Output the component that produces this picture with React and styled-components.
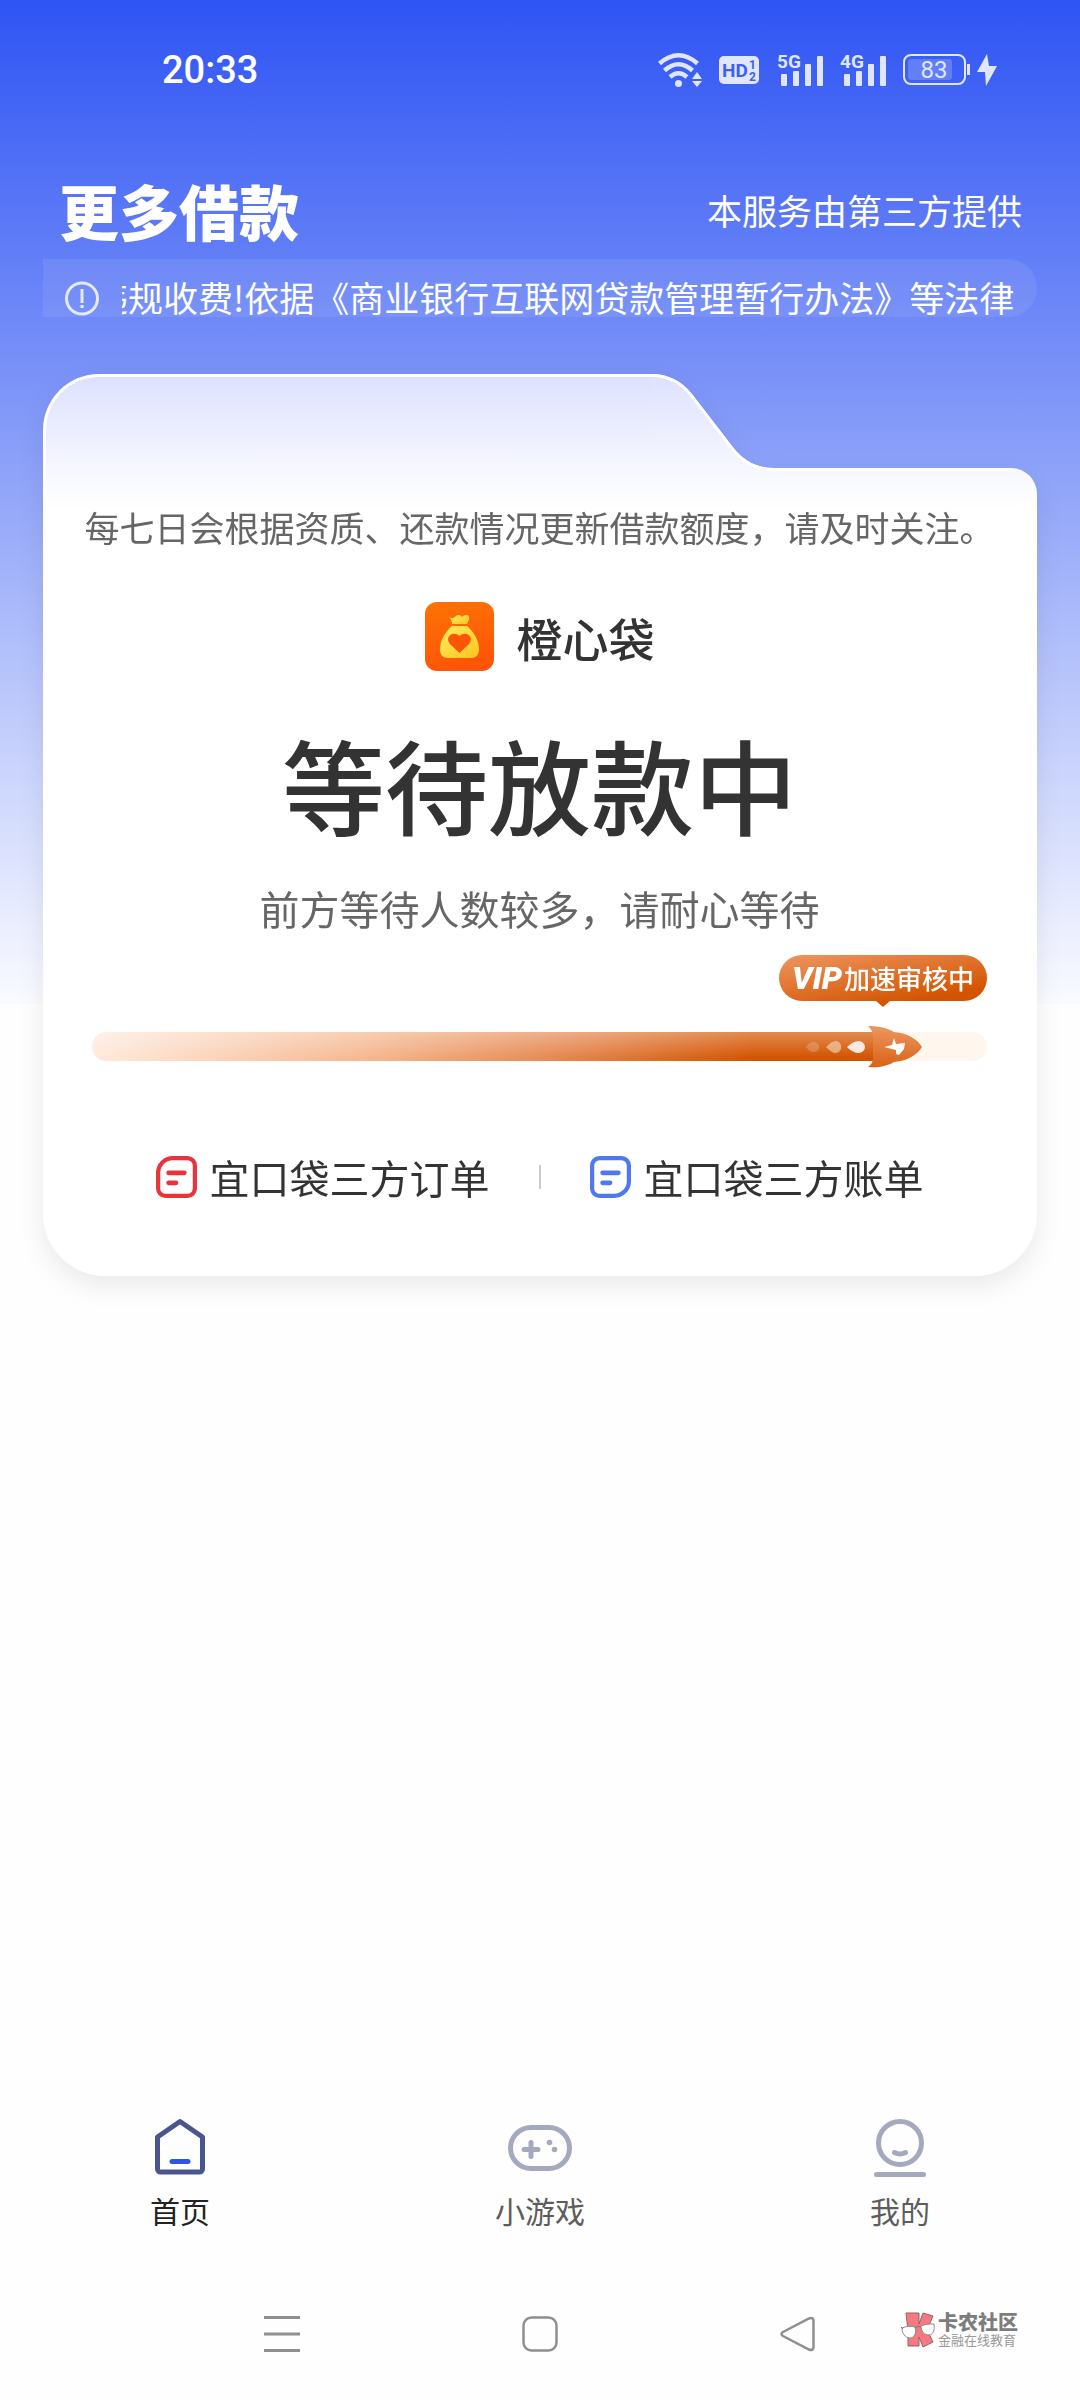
import React, { useState } from "react";
import styled, { createGlobalStyle } from "styled-components";

const GlobalStyle = createGlobalStyle`
  * {
    box-sizing: border-box;
  }
  body {
    margin: 0;
    background: #fefefe;
    font-family: "Noto Sans CJK SC", "Noto Sans", sans-serif;
    color: #333333;
  }
  button {
    border: none;
    background: none;
    padding: 0;
    font-family: inherit;
    cursor: pointer;
  }
  svg {
    display: block;
    flex: none;
  }
`;

const Page = styled.div`
  position: relative;
  min-height: 100vh;
  display: flex;
  flex-direction: column;
  background: linear-gradient(#2e54f4, #fafbff) no-repeat;
  background-size: 100% 1004px;
`;

const StatusBar = styled.div`
  height: 140px;
  padding: 0 83px 0 162px;
  display: flex;
  justify-content: space-between;
  align-items: center;
`;

const Clock = styled.time`
  font-family: Roboto, sans-serif;
  font-size: 38px;
  font-weight: 500;
  line-height: 40px;
  color: white;
`;

const StatusIcons = styled.div`
  display: flex;
  align-items: center;
  gap: 16px;
  color: #dfe6fe;
`;

const Header = styled.header`
  height: 119px;
  padding: 20px 58px 0 59px;
  display: flex;
  justify-content: space-between;
  align-items: center;
  color: white;
`;

const PageTitle = styled.h1`
  margin: 0;
  font-size: 60px;
  line-height: 60px;
  font-weight: 900;
`;

const Provider = styled.span`
  font-size: 35px;
  line-height: 50px;
`;

const Notice = styled.div`
  height: 58px;
  margin: 0 43px;
  padding: 0 22px;
  display: flex;
  align-items: flex-end;
  gap: 23px;
  border-radius: 0 30px 30px 0;
  background: rgba(255, 255, 255, 0.08);
  color: white;
`;

const NoticeTrack = styled.div`
  flex: 1;
  min-width: 0;
  display: flex;
  margin-bottom: 2px;
  overflow: hidden;
`;

const NoticeText = styled.span`
  flex: none;
  margin-left: -29px;
  font-size: 35px;
  line-height: 36px;
  white-space: nowrap;
`;

const Card = styled.main`
  margin: 57px 43px 0;
  filter: drop-shadow(0 10px 12px rgba(0, 0, 0, 0.08));
`;

const CardTab = styled.div`
  display: flex;
  height: 94px;
  padding-right: 263px;
`;

const TabFace = styled.div`
  flex: 1;
  border: solid white;
  border-width: 3px 0 0 3px;
  border-top-left-radius: 56px;
  background: linear-gradient(#dde1fe, #f6f7ff);
`;

const CardBody = styled.div`
  padding: 34px 50px 74px 49px;
  display: flex;
  flex-direction: column;
  align-items: center;
  border-radius: 0 26px 62px 62px;
  background: linear-gradient(white, white) top right / 270px 3px no-repeat,
    linear-gradient(white, white) top left / 3px 42px no-repeat,
    linear-gradient(#f6f7ff, #ffffff 42px);
`;

const Hint = styled.p`
  margin: 0 -10px;
  font-size: 35px;
  line-height: 50px;
  color: #666666;
  white-space: nowrap;
`;

const Product = styled.div`
  margin-top: 50px;
  display: flex;
  align-items: center;
  gap: 23px;
  font-size: 46px;
  line-height: 68px;
  font-weight: 500;
`;

const State = styled.h2`
  margin: 53px 0 0;
  font-size: 103px;
  line-height: 120px;
  font-weight: 500;
`;

const Queue = styled.p`
  margin: 39px 0 0;
  font-size: 40px;
  line-height: 50px;
  color: #666666;
`;

const Badge = styled.div`
  position: relative;
  align-self: flex-end;
  height: 46px;
  margin-top: 22px;
  padding: 0 13px;
  display: flex;
  align-items: center;
  gap: 2px;
  border-radius: 23px;
  background: linear-gradient(170deg, #ee9660, #d35400 85%);
  color: white;
  font-size: 26px;
  line-height: 46px;
  font-weight: 500;
  &::after {
    content: "";
    position: absolute;
    top: 46px;
    left: 50%;
    margin-left: -7px;
    border: solid transparent;
    border-width: 6px 7px 0;
    border-top-color: #d35400;
  }
`;

const Vip = styled.em`
  font-family: Roboto, sans-serif;
  font-size: 32px;
  font-weight: 900;
`;

const Track = styled.div`
  position: relative;
  align-self: stretch;
  height: 29px;
  margin-top: 31px;
  border-radius: 15px;
  background: #fff6ee;
`;

const Fill = styled.div`
  height: 100%;
  border-radius: 15px 0 0 15px;
  background: linear-gradient(
      rgba(255, 255, 255, 0.32),
      rgba(255, 255, 255, 0) 90%
    ),
    linear-gradient(
      to right,
      #ffeadc,
      #f6b992 34%,
      #e5864e 60%,
      #d35400 84%
    );
`;

const Rocket = styled.svg`
  position: absolute;
  top: -6px;
  right: 65px;
`;

const Links = styled.nav`
  margin-top: 91px;
  display: flex;
  align-items: center;
  gap: 49px;
`;

const Divider = styled.span`
  width: 2px;
  height: 24px;
  background: #cccccc;
`;

const OrderLink = styled.a`
  display: flex;
  align-items: center;
  gap: 13px;
  font-size: 40px;
  line-height: 50px;
  color: #333333;
  text-decoration: none;
`;

const TabBar = styled.nav`
  margin-top: auto;
  padding-bottom: 38px;
  display: grid;
  grid-template-columns: repeat(3, 1fr);
`;

const TabButton = styled.button`
  display: flex;
  flex-direction: column;
  align-items: center;
  gap: 11px;
  font-size: 30px;
  line-height: 40px;
  color: ${(props) => (props.$active ? "#222222" : "#5c5c5c")};
`;

const SystemNav = styled.div`
  position: relative;
  height: 132px;
  display: flex;
  justify-content: center;
  align-items: center;
  gap: 222px;
`;

const Watermark = styled.div`
  position: absolute;
  right: 62px;
  top: 44px;
  display: flex;
  gap: 3px;
  color: #7d7d7d;
`;

const WatermarkText = styled.div`
  display: flex;
  flex-direction: column;
  font-size: 20px;
  line-height: 20px;
  font-weight: 900;
  small {
    font-size: 13px;
    line-height: 16px;
    font-weight: 400;
    color: #999999;
  }
`;

const WifiIcon = () => (
  <svg width="45" height="36" viewBox="0 0 45 36" fill="none">
    <g stroke="currentColor" strokeWidth="4.500">
      <path d="M1.500 11.500Q20.500 -5 39.500 11.500" />
      <path d="M6.500 18.500Q20.500 6 34.500 18.500" />
      <path d="M12 25Q20.500 17.500 29 25" />
    </g>
    <circle cx="20.500" cy="31.500" r="3.500" fill="currentColor" />
    <path d="M34 27l5-7 5 7zM34 29h10l-5 6z" fill="currentColor" />
  </svg>
);

const HdIcon = () => (
  <svg width="42" height="28" viewBox="0 0 42 28">
    <rect width="40" height="28" rx="5" fill="currentColor" />
    <g fill="#3c60f6" fontFamily="Roboto, sans-serif" fontWeight="700">
      <text x="3" y="21" fontSize="19">
        HD
      </text>
      <text x="30" y="13" fontSize="12">
        1
      </text>
      <text x="30" y="25" fontSize="12">
        2
      </text>
    </g>
  </svg>
);

const SignalIcon = ({ label }) => (
  <svg width="47" height="42" viewBox="0 -4 47 42" fill="currentColor">
    <text
      x="0"
      y="15"
      fontFamily="Roboto, sans-serif"
      fontSize="19"
      fontWeight="700"
    >
      {label}
    </text>
    <rect x="4" y="21" width="6" height="12" rx="1" />
    <rect x="16" y="18" width="6" height="15" rx="1" />
    <rect x="28" y="11" width="6" height="22" rx="1" />
    <rect x="40" y="3" width="6" height="30" rx="1" />
  </svg>
);

const BatteryIcon = () => (
  <svg width="94" height="34" viewBox="0 0 94 34">
    <rect
      x="1"
      y="2"
      width="61"
      height="29"
      rx="7"
      fill="none"
      stroke="currentColor"
      strokeWidth="2"
    />
    <rect x="5" y="6" width="44" height="21" rx="3" fill="#fff" opacity="0.2" />
    <rect x="64" y="11" width="3" height="11" fill="currentColor" />
    <text
      x="31"
      y="25"
      textAnchor="middle"
      fontFamily="Roboto, sans-serif"
      fontSize="24"
      fill="currentColor"
    >
      83
    </text>
    <path d="M84 1L74 19h8l1 14 11-20h-8l-2-12z" fill="currentColor" />
  </svg>
);

const AlertIcon = () => (
  <svg width="34" height="36" viewBox="0 0 34 36" fill="none">
    <circle cx="17" cy="17.500" r="15.500" stroke="#e4e9ff" strokeWidth="3" />
    <path d="M17 8v14M17 24v3" stroke="#e4e9ff" strokeWidth="3" />
  </svg>
);

const TabSlope = () => (
  <svg width="122" height="94" viewBox="0 0 122 94">
    <defs>
      <linearGradient id="slope" x1="0" y1="0" x2="0" y2="1">
        <stop offset="0" stopColor="#dde1fe" />
        <stop offset="1" stopColor="#f6f7ff" />
      </linearGradient>
      <clipPath id="slopeEdge">
        <path d="M0 0C16 0 30 7 40 20L80 72C91 87 105 94 122 94H0z" />
      </clipPath>
    </defs>
    <g clipPath="url(#slopeEdge)">
      <rect width="122" height="94" fill="url(#slope)" />
      <path
        d="M0 0C16 0 30 7 40 20L80 72C91 87 105 94 122 94"
        fill="none"
        stroke="white"
        strokeWidth="6"
      />
    </g>
  </svg>
);

const BagIcon = () => (
  <svg width="69" height="69" viewBox="0 0 69 69">
    <defs>
      <linearGradient id="tile" x1="0" y1="0" x2="0.300" y2="1">
        <stop offset="0" stopColor="#fd7405" />
        <stop offset="1" stopColor="#fe5507" />
      </linearGradient>
      <linearGradient id="bag" x1="0" y1="0" x2="1" y2="1">
        <stop offset="0" stopColor="#ffec5c" />
        <stop offset="1" stopColor="#fdc521" />
      </linearGradient>
    </defs>
    <rect width="69" height="69" rx="12" fill="url(#tile)" />
    <path
      d="M24 15c3 2 5 1 7-1 2-2 5-1 6 1 2-2 6-3 7 0 1 2-1 4-2 7H27c0-3-1-5-3-7z"
      fill="url(#bag)"
    />
    <path
      d="M27 24h15c6 5 12 14 12 23 0 6-3 9-8 9H23c-5 0-8-3-8-9 0-9 6-18 12-23z"
      fill="url(#bag)"
    />
    <path
      d="M34.500 51L25 42c-6-7 3-14 9.500-8 6.500-6 15.500 1 9.500 8z"
      fill="#fd5508"
    />
  </svg>
);

const RocketArt = () => (
  <Rocket width="116" height="42" viewBox="0 0 116 42">
    <defs>
      <linearGradient id="rocket" x1="0" y1="0" x2="0" y2="1">
        <stop offset="0" stopColor="#ee9660" />
        <stop offset="1" stopColor="#d86316" />
      </linearGradient>
    </defs>
    <path
      d="M62 0C72 0 82 2 88 6c14 1 24 8 28 15-4 7-14 14-28 15-6 4-16 6-26 5 3-2 5-5 5-9V11c0-5-2-8-5-11z"
      fill="url(#rocket)"
    />
    <path d="M88 12l2 6 9-1-1 6-5 6-3-1v-4l-12-3 8-2z" fill="white" />
    <g fill="white">
      <path
        d="M41 21c4-4 8-6 12-6 8 1 8 11 0 12-4 0-8-2-12-6z"
        opacity="0.850"
      />
      <path
        d="M20 21c4-4 7-6 10-6 7 1 7 11 0 12-3 0-6-2-10-6z"
        opacity="0.450"
      />
      <path
        d="M0 21c3-4 5-5 8-5 7 1 7 10 0 10-3 0-5-1-8-5z"
        opacity="0.200"
      />
    </g>
  </Rocket>
);

const OrderIcon = () => (
  <svg width="41" height="42" viewBox="1 1 39 40" fill="none" stroke="#e8333a">
    <path
      d="M17 3h14a7 7 0 0 1 7 7v22a7 7 0 0 1-7 7H10a7 7 0 0 1-7-7V17A14 14 0 0 1 17 3z"
      strokeWidth="4"
    />
    <path d="M13 17h15M13 26.500h7" strokeWidth="4.500" strokeLinecap="round" />
  </svg>
);

const BillIcon = () => (
  <svg width="41" height="42" viewBox="1 1 39 40" fill="none" stroke="#4f78ee">
    <path
      d="M10 3h21a7 7 0 0 1 7 7v15A14 14 0 0 1 24 39H10a7 7 0 0 1-7-7V10a7 7 0 0 1 7-7z"
      strokeWidth="4"
    />
    <path d="M13 17h15M13 26.500h7" strokeWidth="4.500" strokeLinecap="round" />
  </svg>
);

const HomeIcon = () => (
  <svg width="64" height="64" viewBox="0 0 64 64" fill="none">
    <path
      d="M32 6.500L54.500 22V54a3 3 0 0 1-3 3h-39a3 3 0 0 1-3-3V22z"
      stroke="#48558f"
      strokeWidth="5"
      strokeLinejoin="round"
    />
    <path
      d="M24 46.500h16"
      stroke="#2f55e6"
      strokeWidth="5"
      strokeLinecap="round"
    />
  </svg>
);

const GameIcon = () => (
  <svg width="64" height="64" viewBox="0 0 64 64" fill="none" stroke="#a4a9bf">
    <rect x="2.500" y="12.500" width="59" height="41" rx="20.500" strokeWidth="5" />
    <path d="M16 34.500h14M23 27.500v14" strokeWidth="5" strokeLinecap="round" />
    <circle cx="41.500" cy="27.500" r="2.800" fill="#a4a9bf" stroke="none" />
    <circle cx="46.500" cy="34.500" r="2.800" fill="#a4a9bf" stroke="none" />
  </svg>
);

const MineIcon = () => (
  <svg width="64" height="64" viewBox="0 0 64 64" fill="none" stroke="#a4a9bf">
    <circle cx="32" cy="28" r="21.500" strokeWidth="5" />
    <path
      d="M26.500 37.500q5.500 3 11 0M8.500 59.500h47"
      strokeWidth="5"
      strokeLinecap="round"
    />
  </svg>
);

const MenuIcon = () => (
  <svg width="36" height="36" viewBox="0 0 36 36">
    <path d="M0 1.500h36M0 18h36M0 34.500h36" stroke="#8f8f8f" strokeWidth="3" />
  </svg>
);

const SquareIcon = () => (
  <svg width="36" height="36" viewBox="0 0 36 36">
    <rect
      x="1.500"
      y="1.500"
      width="33"
      height="33"
      rx="8"
      fill="none"
      stroke="#8f8f8f"
      strokeWidth="2.500"
    />
  </svg>
);

const BackIcon = () => (
  <svg width="36" height="36" viewBox="0 0 36 36">
    <path
      d="M3 16L29 2.500q4-1.500 4.500 2v27q-.5 3.500-4.500 2L3 20q-3-2 0-4z"
      fill="none"
      stroke="#8f8f8f"
      strokeWidth="2.500"
    />
  </svg>
);

const WatermarkLogo = () => (
  <svg width="34" height="36" viewBox="0 0 34 36">
    <path
      d="M5 1h13v11l4-11 10 3-6 14 6 12-10 5-4-10v9H7V19z"
      fill="#f5797f"
      stroke="#8a6468"
    />
    <g fill="white" stroke="#8a8a8a">
      <path d="M1 16c5-2 9-2 13-1 2 6-1 11-5 11-5 0-8-5-8-10z" />
      <path d="M20 14c4-2 8-2 13-2 1 6-1 11-5 11-5 0-8-4-8-9z" />
    </g>
    <path d="M0 15l2 2M14 16q3-3 6-1" fill="none" stroke="#777777" />
  </svg>
);

const tabs = [
  { name: "首页", Icon: HomeIcon },
  { name: "小游戏", Icon: GameIcon },
  { name: "我的", Icon: MineIcon },
];

const progress = 88;

const App = () => {
  const [active, setActive] = useState(0);

  return (
    <>
      <GlobalStyle />
      <Page>
        <StatusBar>
          <Clock>20:33</Clock>
          <StatusIcons>
            <WifiIcon />
            <HdIcon />
            <SignalIcon label="5G" />
            <SignalIcon label="4G" />
            <BatteryIcon />
          </StatusIcons>
        </StatusBar>
        <Header>
          <PageTitle>更多借款</PageTitle>
          <Provider>本服务由第三方提供</Provider>
        </Header>
        <Notice>
          <AlertIcon />
          <NoticeTrack>
            <NoticeText>
              违规收费!依据《商业银行互联网贷款管理暂行办法》等法律法规
            </NoticeText>
          </NoticeTrack>
        </Notice>
        <Card>
          <CardTab>
            <TabFace />
            <TabSlope />
          </CardTab>
          <CardBody>
            <Hint>每七日会根据资质、还款情况更新借款额度，请及时关注。</Hint>
            <Product>
              <BagIcon />
              橙心袋
            </Product>
            <State>等待放款中</State>
            <Queue>前方等待人数较多，请耐心等待</Queue>
            <Badge>
              <Vip>VIP</Vip>
              加速审核中
            </Badge>
            <Track>
              <Fill style={{ width: `${progress}%` }} />
              <RocketArt />
            </Track>
            <Links>
              <OrderLink href="#orders">
                <OrderIcon />
                宜口袋三方订单
              </OrderLink>
              <Divider />
              <OrderLink href="#bills">
                <BillIcon />
                宜口袋三方账单
              </OrderLink>
            </Links>
          </CardBody>
        </Card>
        <TabBar>
          {tabs.map(({ name, Icon }, idx) => (
            <TabButton
              key={name}
              $active={idx === active}
              onClick={() => setActive(idx)}
            >
              <Icon />
              {name}
            </TabButton>
          ))}
        </TabBar>
        <SystemNav>
          <button aria-label="菜单">
            <MenuIcon />
          </button>
          <button aria-label="主屏幕">
            <SquareIcon />
          </button>
          <button aria-label="返回">
            <BackIcon />
          </button>
          <Watermark>
            <WatermarkLogo />
            <WatermarkText>
              卡农社区
              <small>金融在线教育</small>
            </WatermarkText>
          </Watermark>
        </SystemNav>
      </Page>
    </>
  );
};

export default App;
